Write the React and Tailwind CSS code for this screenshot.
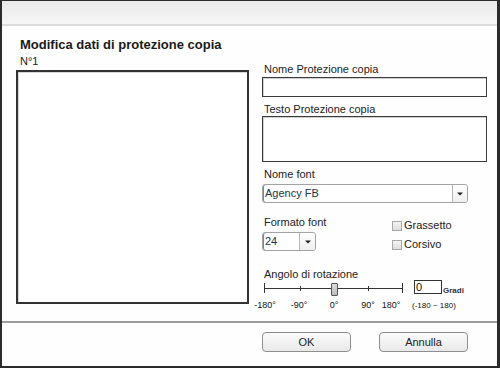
import React from 'react';

function Arrow() {
  return (
    <svg width="6" height="4" viewBox="0 0 6 4">
      <path d="M0 0.5 L6 0.5 L3 3.5 Z" fill="#222" />
    </svg>
  );
}

function Select({ value, width, arrowWidth }) {
  return (
    <div className={`flex h-[19px] ${width} rounded-[3px] border border-[#a3a3a3] bg-white shadow-[inset_1px_0_0_#6f8c99]`}>
      <div className="flex-1 pl-[2px] text-[11px] leading-[17px] text-[#1e3647]">{value}</div>
      <div className={`${arrowWidth} flex items-center justify-center border-l border-[#b5b5b5] rounded-r-[3px] bg-gradient-to-b from-[#ffffff] to-[#efefef]`}>
        <Arrow />
      </div>
    </div>
  );
}

function Checkbox({ label }) {
  return (
    <div className="flex h-[19px] items-center gap-[2px]">
      <div className="h-[10px] w-[10px] border border-[#a8a8a8] bg-gradient-to-b from-[#f4f4f4] to-[#dedede]" />
      <span className="text-[11px] leading-[13px] text-[#222]">{label}</span>
    </div>
  );
}

export default function App() {
  const ticks = [
    { left: 0, tall: true },
    { left: 36, tall: false },
    { left: 104, tall: false },
    { left: 138, tall: true },
  ];
  const scale = [
    { text: '-180°', left: -17 },
    { text: '-90°', left: 17 },
    { text: '0°', left: 52 },
    { text: '90°', left: 86 },
    { text: '180°', left: 109 },
  ];

  return (
    <div className="flex h-[368px] w-[500px] flex-col border-t border-l-2 border-r-[3px] border-b-2 border-[#2b2b2b] bg-[#fefefe] font-['Liberation_Sans',Arial,sans-serif] text-[#1a1a1a]">
      {/* title bar */}
      <div className="h-[25px] border-b-2 border-[#dcdcdc] bg-gradient-to-b from-[#e9e9e9] to-[#f6f6f6]" />

      <div className="flex flex-1 flex-col">
        <h2 className="pl-[18px] pt-[11px] text-[13px] font-bold leading-[16px] text-[#1a1a1a]">
          Modifica dati di protezione copia
        </h2>

        <div className="flex">
          {/* left preview */}
          <div className="ml-[14px] flex flex-col">
            <div className="ml-[4px] mt-[2px] text-[11px] leading-[13px] text-[#222]">N°1</div>
            <div className="mt-[2px] h-[234px] w-[233px] border-2 border-[#333] bg-white shadow-[inset_1px_1px_0_#d6d6d6]" />
          </div>

          {/* right form */}
          <div className="ml-[13px] mt-[10px] flex w-[225px] flex-col">
            <label className="pl-[2px] text-[11px] leading-[13px] text-[#222]">Nome Protezione copia</label>
            <div className="mt-[1px] h-[20px] border border-[#3a3a3a] bg-white shadow-[inset_1px_1px_0_#d0d0d0]" />

            <label className="mt-[6px] pl-[2px] text-[11px] leading-[13px] text-[#222]">Testo Protezione copia</label>
            <div className="h-[46px] border border-[#3a3a3a] bg-white shadow-[inset_1px_1px_0_#d0d0d0]" />

            <label className="mt-[6px] pl-[2px] text-[11px] leading-[13px] text-[#222]">Nome font</label>
            <div className="mt-[3px]">
              <Select value="Agency FB" width="w-[206px]" arrowWidth="w-[15px]" />
            </div>

            <div className="mt-[13px] flex">
              <div className="flex w-[130px] flex-col">
                <label className="pl-[2px] text-[11px] leading-[13px] text-[#222]">Formato font</label>
                <div className="mt-[3px]">
                  <Select value="24" width="w-[54px]" arrowWidth="w-[16px]" />
                </div>
              </div>
              <div className="flex flex-col">
                <Checkbox label="Grassetto" />
                <Checkbox label="Corsivo" />
              </div>
            </div>

            <label className="mt-[14px] pl-[2px] text-[11px] leading-[12px] text-[#222]">Angolo di rotazione</label>

            {/* slider */}
            <div className="flex items-start">
              <div className="relative ml-[2px] mt-[3px] h-[14px] w-[139px]">
                <div className="absolute left-0 right-0 top-[5px] h-px bg-[#333]" />
                {ticks.map((t, i) => (
                  <div
                    key={i}
                    className={`absolute w-px bg-[#333] ${t.tall ? 'top-0 h-[10px]' : 'top-[3px] h-[5px]'}`}
                    style={{ left: t.left }}
                  />
                ))}
                <div className="absolute left-[67px] top-0 h-[13px] w-[7px] rounded-[1px] border border-[#555] bg-gradient-to-b from-[#dcdcdc] to-[#bdbdbd]" />
              </div>
              <div className="ml-[11px] h-[14px] w-[28px] border border-[#333] bg-white pl-[1px] text-[11px] leading-[12px] text-[#111]">0</div>
              <span className="ml-[1px] mt-[6px] text-[8px] font-bold leading-[9px] text-[#333]">Gradi</span>
            </div>
            <div className="relative mt-[3px] h-[12px] text-[9px] leading-[11px] text-[#111]">
              {scale.map((s) => (
                <span key={s.text} className="absolute top-0 w-[40px] text-center" style={{ left: s.left }}>
                  {s.text}
                </span>
              ))}
              <span className="absolute left-[150px] top-0 text-[8px]">(-180 ~ 180)</span>
            </div>
          </div>
        </div>
      </div>

      {/* footer */}
      <div className="flex h-[45px] gap-[28px] border-t-2 border-[#9c9c9c] pl-[260px] pt-[9px]">
        <button className="h-[20px] w-[89px] rounded-[4px] border border-[#8e8e8e] bg-gradient-to-b from-[#fbfbfb] to-[#e9e9e9] text-[11px] leading-[18px] text-[#222]">
          OK
        </button>
        <button className="h-[20px] w-[89px] rounded-[4px] border border-[#8e8e8e] bg-gradient-to-b from-[#fbfbfb] to-[#e9e9e9] text-[11px] leading-[18px] text-[#222]">
          Annulla
        </button>
      </div>
    </div>
  );
}
